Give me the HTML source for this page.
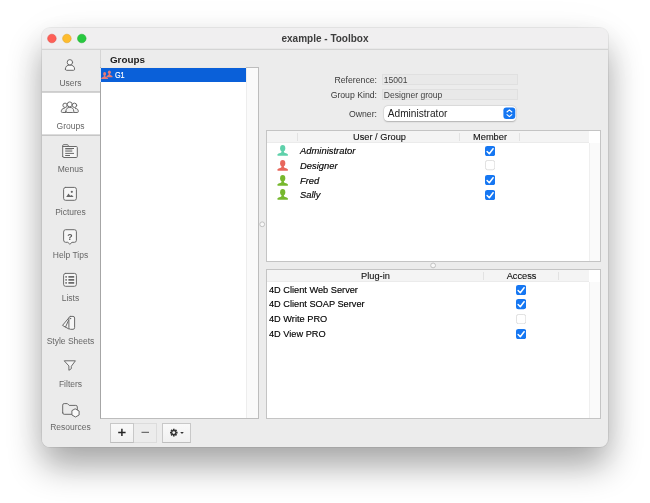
<!DOCTYPE html>
<html>
<head>
<meta charset="utf-8">
<title>example - Toolbox</title>
<style>
html,body{margin:0;padding:0;}
body{width:650px;height:503px;background:#fff;overflow:hidden;position:relative;font-family:"Liberation Sans",sans-serif;color:#222;}
.abs{position:absolute;}
#win{will-change:transform;position:absolute;left:42px;top:28px;width:566px;height:419px;background:#ececec;border-radius:8px;
 box-shadow:0 0 0 1px rgba(0,0,0,0.065),0 19px 34px rgba(0,0,0,0.335),0 8px 50px rgba(0,0,0,0.05);overflow:hidden;}
#tb{position:absolute;left:0;top:0;width:566px;height:23px;background:linear-gradient(#f0eff0 0,#f0eff0 21px,#e8e8e8 21px,#e8e8e8 22px,#d4d4d4 22px);z-index:3;}
.tl{position:absolute;top:7px;width:9px;height:9px;border-radius:50%;}
#title{position:absolute;left:0;width:566px;top:5.9px;text-align:center;font-weight:bold;font-size:10px;line-height:12px;color:#3d3d3d;}
#side{position:absolute;left:0;top:22px;width:58px;height:398px;background:#ebebeb;}
.cell{position:absolute;left:0;width:57px;height:43px;}
.cell .lb{position:absolute;left:-10px;width:77px;top:29px;text-align:center;font-size:8.5px;line-height:10px;color:#666;white-space:nowrap;}
.cell svg{position:absolute;left:0;top:0;}
.selbg{position:absolute;left:0;top:42px;width:58px;height:45px;background:linear-gradient(#cdcdcd 0,#cdcdcd 1px,#d3d3d3 1px,#d3d3d3 2px,#fff 2px,#fff 43px,#dcdcdc 43px,#dcdcdc 44px,#c6c6c6 44px);}
.lbl{position:absolute;font-size:8.7px;line-height:11px;color:#3a3a3a;white-space:nowrap;}
.fld{position:absolute;box-sizing:border-box;border:1px solid #e0e0e0;background:#e9e9e9;font-size:8.55px;line-height:9px;color:#444;padding-left:2px;white-space:nowrap;}
.box{position:absolute;box-sizing:border-box;border:1px solid #c4c4c4;background:#fff;}
.hd{position:absolute;left:0;top:0;height:11px;background:#f4f4f4;border-bottom:1px solid #ebebeb;}
.hd .t{position:absolute;top:0;font-size:9.25px;line-height:12px;color:#111;-webkit-text-stroke:0.1px #111;text-align:center;white-space:nowrap;}
.hd .s{position:absolute;top:2px;width:1px;height:8px;background:#e2e2e2;}
.row{position:absolute;font-size:9.5px;line-height:12px;color:#000;white-space:nowrap;transform:scaleX(0.97);transform-origin:0 0;-webkit-text-stroke:0.15px #000;}
.cb{position:absolute;width:10.2px;height:10.2px;}
.cb svg{position:absolute;left:0;top:0;}
.btn{position:absolute;box-sizing:border-box;border:1px solid #c8c8c8;border-bottom-color:#bebebe;background:linear-gradient(#f9f9f9,#f0f0f0);}
</style>
</head>
<body>
<div id="win">
<div id="in" style="position:absolute;left:0;top:-1px;width:566px;height:420px;">
  <div id="tb">
    <svg class="abs" style="left:0;top:0;" width="60" height="23" viewBox="0 0 60 23"><circle cx="9.9" cy="11.5" r="4.3" fill="#fe5f57" stroke="#df4a42" stroke-width="0.5"/><circle cx="24.9" cy="11.5" r="4.3" fill="#febc2e" stroke="#dfa023" stroke-width="0.5"/><circle cx="39.8" cy="11.5" r="4.3" fill="#28c840" stroke="#1dad2b" stroke-width="0.5"/></svg>
    <div id="title">example - Toolbox</div>
  </div>
  <div id="side">
    <div class="cell" style="top:0"><svg width="58" height="43" viewBox="0 0 58 43" fill="none" stroke="#6a6a6a" stroke-width="1" stroke-linejoin="round" stroke-linecap="round"><path d="M23.4 20.2C23.4 17.2 25.2 16.1 27.9 16.1C30.6 16.1 32.6 17.2 32.6 20.2Q32.6 21.3 31.5 21.3L24.5 21.3Q23.4 21.3 23.4 20.2Z" fill="#f8f8f8"/><circle cx="27.9" cy="13.3" r="2.7" fill="#fafafa"/></svg><div class="lb">Users</div></div>
    <div class="selbg"></div><div class="cell" style="top:43px"><svg width="58" height="43" viewBox="0 0 58 43" fill="none" stroke="#6a6a6a" stroke-width="1" stroke-linejoin="round" stroke-linecap="round"><circle cx="23.1" cy="13.3" r="2.2" fill="#fafafa"/><circle cx="32.5" cy="13.3" r="2.2" fill="#fafafa"/><path d="M23.8 20.5L20.3 20.5Q19.3 20.5 19.3 19.5C19.3 17.6 20.2 16.5 22.3 16.3M31.8 20.5L35.3 20.5Q36.3 20.5 36.3 19.5C36.3 17.6 35.4 16.5 33.3 16.3" fill="#f0f0f0"/><path d="M23.8 19.6C23.8 16.6 25.3 15.4 27.8 15.4C30.3 15.4 31.8 16.6 31.8 19.6Q31.8 20.5 30.8 20.5L24.8 20.5Q23.8 20.5 23.8 19.6Z" fill="#f4f4f4"/><circle cx="27.8" cy="12.4" r="2.5" fill="#fff"/></svg><div class="lb">Groups</div></div>
    <div class="cell" style="top:86px"><svg width="58" height="43" viewBox="0 0 58 43" fill="none" stroke="#6a6a6a" stroke-width="1" stroke-linejoin="round" stroke-linecap="round"><path d="M20.7 21.5L20.7 10.7Q20.7 9.7 21.7 9.7L25.3 9.7Q26.3 9.7 26.3 10.7L26.3 11.5L34.3 11.5Q35.3 11.5 35.3 12.5L35.3 21.5Q35.3 22.5 34.3 22.5L21.7 22.5Q20.7 22.5 20.7 21.5Z" fill="#f6f6f6"/><path d="M20.7 11.5L26.3 11.5"/><path d="M23.2 13.5H32M23.2 18.4H32M23.2 20.5H28" stroke-linecap="butt"/><path d="M23.2 14.8H30.3" stroke="#bdbdbd" stroke-width="1.6" stroke-linecap="butt"/><path d="M23.2 16.1H30.3" stroke-linecap="butt"/></svg><div class="lb">Menus</div></div>
    <div class="cell" style="top:129px"><svg width="58" height="43" viewBox="0 0 58 43" fill="none" stroke="#6a6a6a" stroke-width="1" stroke-linejoin="round" stroke-linecap="round"><rect x="21.6" y="9.4" width="12.8" height="12.9" rx="2" fill="#f6f6f6"/><circle cx="29.8" cy="13.8" r="1.1" fill="#666" stroke="none"/><path d="M24.2 18.9L26.5 15.4L28.2 17.8L29.8 16.9L31.6 18.9Z" fill="#666" stroke="none"/></svg><div class="lb">Pictures</div></div>
    <div class="cell" style="top:172px"><svg width="58" height="43" viewBox="0 0 58 43" fill="none" stroke="#6a6a6a" stroke-width="1" stroke-linejoin="round" stroke-linecap="round"><path d="M21.6 10.7Q21.6 8.7 23.6 8.7L32.4 8.7Q34.4 8.7 34.4 10.7L34.4 19.3Q34.4 21.3 32.4 21.3L30 21.3L27.9 23.3L25.8 21.3L23.6 21.3Q21.6 21.3 21.6 19.3Z" fill="#f6f6f6"/><text x="27.9" y="18.9" text-anchor="middle" font-family="Liberation Sans, sans-serif" font-weight="bold" font-size="8.8" fill="#555" stroke="none">?</text></svg><div class="lb">Help Tips</div></div>
    <div class="cell" style="top:215px"><svg width="58" height="43" viewBox="0 0 58 43" fill="none" stroke="#6a6a6a" stroke-width="1" stroke-linejoin="round" stroke-linecap="round"><rect x="21.6" y="9.4" width="12.8" height="12.9" rx="2" fill="#f6f6f6"/><path d="M23.4 12.9H24.8M26.4 12.9H32.2M23.4 15.9H24.8M26.4 15.9H32.2M23.4 18.9H24.8M26.4 18.9H32.2" stroke-width="1.6" stroke-linecap="butt"/></svg><div class="lb">Lists</div></div>
    <div class="cell" style="top:258px"><svg width="58" height="43" viewBox="0 0 58 43" fill="none" stroke="#6a6a6a" stroke-width="1" stroke-linejoin="round" stroke-linecap="round"><path d="M26.9 10.8L20.5 18.4L26.9 22" fill="#f2f2f2"/><path d="M26.6 13.2L23.5 20.1"/><rect x="26.9" y="9.4" width="5.7" height="12.9" rx="1.6" fill="#f6f6f6"/><circle cx="28.6" cy="11.5" r="0.7" fill="#6a6a6a" stroke="none"/></svg><div class="lb">Style Sheets</div></div>
    <div class="cell" style="top:301px"><svg width="58" height="43" viewBox="0 0 58 43" fill="none" stroke="#6a6a6a" stroke-width="1" stroke-linejoin="round" stroke-linecap="round"><path d="M22.6 10.8L33.4 10.8L29.3 16.3L29.3 18.7L26.9 20.3L26.9 16.3Z" fill="#f4f4f4"/></svg><div class="lb">Filters</div></div>
    <div class="cell" style="top:344px"><svg width="58" height="43" viewBox="0 0 58 43" fill="none" stroke="#6a6a6a" stroke-width="1" stroke-linejoin="round" stroke-linecap="round"><path d="M20.7 19.8L20.7 12.1Q20.7 10.6 22.2 10.6L25.4 10.6L27.2 12.4L33.8 12.4Q35.3 12.4 35.3 13.9L35.3 19.8Q35.3 21.3 33.8 21.3L22.2 21.3Q20.7 21.3 20.7 19.8Z"/><path d="M33.5 16L37.1 18L37.1 22L33.5 24L29.9 22L29.9 18Z" fill="#fafafa"/></svg><div class="lb">Resources</div></div>
  </div>

  <div class="abs" style="left:67.9px;top:27px;font-weight:bold;font-size:9.85px;line-height:12px;color:#1c1c1c;">Groups</div>

  <div class="abs" style="left:58px;top:23px;width:1px;height:17px;background:#d5d5d5;"></div>
  <!-- groups list -->
  <div class="box" style="left:58px;top:40px;width:159px;height:352px;border-color:#bdbdbd;border-left-color:#a6a6a6;z-index:2;">
    <div class="abs" style="left:0;top:0;width:145px;height:14px;background:#0a60d9;"></div><div class="abs" style="left:0;top:-1px;width:145px;height:1px;background:#ebe9e5;"></div><div class="abs" style="left:-1px;top:0;width:1px;height:14px;background:#dde5f2;"></div>
    <svg class="abs" style="left:0;top:2px;" width="13" height="11" viewBox="0 0 13 11" fill="#ea7b76"><ellipse cx="8.4" cy="2.2" rx="1.5" ry="1.8"/><path d="M7.7 3.5L7.7 4.5C7.7 5.3 5.4 5.4 5.4 6.8L5.4 7.3L11.6 7.3L11.6 6.8C11.6 5.4 9.1 5.3 9.1 4.5L9.1 3.5Z"/><ellipse cx="3.6" cy="3.9" rx="1.5" ry="1.8"/><path d="M2.9 5.2L2.9 6.2C2.9 7 0.2 7.1 0.2 8.5L0.2 9L7 9L7 8.5C7 7.1 4.3 7 4.3 6.2L4.3 5.2Z"/></svg><div class="abs" style="left:13.6px;top:1.4px;font-size:9px;line-height:12px;color:#fff;-webkit-text-stroke:0.2px #fff;transform:scaleX(0.8);transform-origin:0 0;">G1</div>
    <div class="abs" style="left:145px;top:0;width:12px;height:350px;background:#fafafa;border-left:1px solid #ededed;box-sizing:border-box;"></div>
  </div>

  <!-- buttons -->
  <div class="btn" style="left:91px;top:396px;width:24px;height:20px;background:#ececec;border-color:#dcdcdc;"></div>
  <div class="btn" style="left:68px;top:396px;width:24px;height:20px;"></div>
  <div class="btn" style="left:120px;top:396px;width:29px;height:20px;"></div>
  <svg class="abs" style="left:68px;top:396px;" width="82" height="20" viewBox="0 0 82 20">
    <path d="M8.2 9.4H15.6M11.9 5.7V13.1" stroke="#262626" stroke-width="1.5" fill="none"/>
    <path d="M31.5 9.4H39" stroke="#6e6e6e" stroke-width="1.1" fill="none"/>
    <g transform="translate(63.8 9.6)" fill="#333">
      <circle r="2.6"/>
      <g stroke="#333" stroke-width="1.7"><path d="M0 -3.8V3.8"/><path d="M0 -3.8V3.8" transform="rotate(45)"/><path d="M0 -3.8V3.8" transform="rotate(90)"/><path d="M0 -3.8V3.8" transform="rotate(135)"/></g>
      <circle r="1.4" fill="#f6f6f6"/>
    </g>
    <path d="M70.2 9L73.8 9L72 11Z" fill="#333"/>
  </svg>

  <svg class="abs" style="left:216px;top:193px;" width="8" height="8" viewBox="0 0 8 8"><circle cx="4.2" cy="4.3" r="2.4" fill="#f8f8f8" stroke="#bcbcbc" stroke-width="0.9"/></svg>
  <svg class="abs" style="left:387px;top:234px;" width="8" height="8" viewBox="0 0 8 8"><circle cx="4.1" cy="4.45" r="2.4" fill="#f8f8f8" stroke="#bcbcbc" stroke-width="0.9"/></svg>
  <!-- form -->
  <div class="lbl" style="right:231px;top:47.7px;">Reference:</div>
  <div class="fld" style="left:340px;top:47px;width:136px;height:11px;"><span style="position:relative;left:-1.2px;top:0.6px">15001</span></div>
  <div class="lbl" style="right:231px;top:63px;">Group Kind:</div>
  <div class="fld" style="left:340px;top:62px;width:136px;height:11px;"><span style="position:relative;left:-1.2px;top:0.9px">Designer group</span></div>
  <div class="lbl" style="right:231px;top:82px;">Owner:</div>
  <div class="abs" style="left:342px;top:79px;width:132px;height:15px;background:#fff;border-radius:4px;box-shadow:0 0 0 0.5px rgba(0,0,0,0.07),0 0.5px 1.5px rgba(0,0,0,0.22);">
    <div class="abs" style="left:3.8px;top:1px;font-size:10.15px;line-height:13px;color:#222;">Administrator</div>
    <svg class="abs" style="left:119px;top:1px;" width="13" height="13" viewBox="0 0 13 13"><rect x="0.4" y="0.5" width="11.9" height="11.5" rx="2.9" fill="#1677f2"/><path d="M4 5L6.4 2.9L8.8 5M4 7.6L6.4 9.7L8.8 7.6" fill="none" stroke="#fff" stroke-width="1.1" stroke-linecap="round" stroke-linejoin="round"/></svg>
  </div>

  <!-- users table -->
  <div class="box" style="left:224px;top:103px;width:335px;height:132px;">
    <div class="hd" style="width:322px;">
      <div class="s" style="left:30px"></div><div class="s" style="left:192px"></div><div class="s" style="left:252px"></div>
      <div class="t" style="left:32px;width:161px;">User / Group</div>
      <div class="t" style="left:193.5px;width:59px;">Member</div>
    </div>
    <div class="abs" style="left:322px;top:12px;width:11px;height:118px;background:#fafafa;border-left:1px solid #efefef;box-sizing:border-box;"></div>
    <svg class="abs" style="left:10px;top:14.00px;" width="12" height="12" viewBox="0 0 12 12"><path d="M4.5 5.2L4.5 6.9C4.5 8 0.3 8 0.3 10Q0.3 10.8 1.1 10.8L10.3 10.8Q11.1 10.8 11.1 10C11.1 8 6.9 8 6.9 6.9L6.9 5.2Z" fill="#5fd1ab"/><ellipse cx="5.7" cy="3.2" rx="2.6" ry="3.2" fill="#5fd1ab"/></svg><div class="row" style="left:33px;top:14px;font-style:italic;font-size:9.7px;">Administrator</div>
    <svg class="abs" style="left:10px;top:28.75px;" width="12" height="12" viewBox="0 0 12 12"><path d="M4.5 5.2L4.5 6.9C4.5 8 0.3 8 0.3 10Q0.3 10.8 1.1 10.8L10.3 10.8Q11.1 10.8 11.1 10C11.1 8 6.9 8 6.9 6.9L6.9 5.2Z" fill="#e8675c"/><ellipse cx="5.7" cy="3.2" rx="2.6" ry="3.2" fill="#e8675c"/></svg><div class="row" style="left:33px;top:28.75px;font-style:italic;font-size:9.7px;">Designer</div>
    <svg class="abs" style="left:10px;top:43.50px;" width="12" height="12" viewBox="0 0 12 12"><path d="M4.5 5.2L4.5 6.9C4.5 8 0.3 8 0.3 10Q0.3 10.8 1.1 10.8L10.3 10.8Q11.1 10.8 11.1 10C11.1 8 6.9 8 6.9 6.9L6.9 5.2Z" fill="#77b82e"/><ellipse cx="5.7" cy="3.2" rx="2.6" ry="3.2" fill="#77b82e"/></svg><div class="row" style="left:33px;top:43.5px;font-style:italic;font-size:9.7px;">Fred</div>
    <svg class="abs" style="left:10px;top:58.25px;" width="12" height="12" viewBox="0 0 12 12"><path d="M4.5 5.2L4.5 6.9C4.5 8 0.3 8 0.3 10Q0.3 10.8 1.1 10.8L10.3 10.8Q11.1 10.8 11.1 10C11.1 8 6.9 8 6.9 6.9L6.9 5.2Z" fill="#77b82e"/><ellipse cx="5.7" cy="3.2" rx="2.6" ry="3.2" fill="#77b82e"/></svg><div class="row" style="left:33px;top:58.25px;font-style:italic;font-size:9.7px;">Sally</div>
    <div class="cb" style="left:217.9px;top:14.60px;"><svg width="10.2" height="10.2" viewBox="0 0 10.2 10.2"><rect x="0" y="0" width="10.2" height="10.2" rx="2.5" fill="#1677f2"/><path d="M2.1 5.6L4.3 7.8L8.1 2.7" fill="none" stroke="#fff" stroke-width="1.5" stroke-linecap="round" stroke-linejoin="round"/></svg></div>
    <div class="cb" style="left:217.9px;top:29.35px;"><svg width="10.2" height="10.2" viewBox="0 0 10.2 10.2"><rect x="0.4" y="0.4" width="9.4" height="9.4" rx="2.3" fill="#fff" stroke="#d6d6d6" stroke-width="0.8"/></svg></div>
    <div class="cb" style="left:217.9px;top:44.10px;"><svg width="10.2" height="10.2" viewBox="0 0 10.2 10.2"><rect x="0" y="0" width="10.2" height="10.2" rx="2.5" fill="#1677f2"/><path d="M2.1 5.6L4.3 7.8L8.1 2.7" fill="none" stroke="#fff" stroke-width="1.5" stroke-linecap="round" stroke-linejoin="round"/></svg></div>
    <div class="cb" style="left:217.9px;top:58.85px;"><svg width="10.2" height="10.2" viewBox="0 0 10.2 10.2"><rect x="0" y="0" width="10.2" height="10.2" rx="2.5" fill="#1677f2"/><path d="M2.1 5.6L4.3 7.8L8.1 2.7" fill="none" stroke="#fff" stroke-width="1.5" stroke-linecap="round" stroke-linejoin="round"/></svg></div>
  </div>

  <!-- plugin table -->
  <div class="box" style="left:224px;top:242px;width:335px;height:150px;">
    <div class="hd" style="width:322px;">
      <div class="s" style="left:216px"></div><div class="s" style="left:291px"></div>
      <div class="t" style="left:0.5px;width:216px;">Plug-in</div>
      <div class="t" style="left:217.6px;width:74px;">Access</div>
    </div>
    <div class="abs" style="left:322px;top:12px;width:11px;height:136px;background:#fafafa;border-left:1px solid #efefef;box-sizing:border-box;"></div>
    <div class="row" style="left:2px;top:13.6px;">4D Client Web Server</div>
    <div class="row" style="left:2px;top:28.3px;">4D Client SOAP Server</div>
    <div class="row" style="left:2px;top:42.8px;">4D Write PRO</div>
    <div class="row" style="left:2px;top:58.25px;">4D View PRO</div>
    <div class="cb" style="left:248.9px;top:14.60px;"><svg width="10.2" height="10.2" viewBox="0 0 10.2 10.2"><rect x="0" y="0" width="10.2" height="10.2" rx="2.5" fill="#1677f2"/><path d="M2.1 5.6L4.3 7.8L8.1 2.7" fill="none" stroke="#fff" stroke-width="1.5" stroke-linecap="round" stroke-linejoin="round"/></svg></div>
    <div class="cb" style="left:248.9px;top:29.35px;"><svg width="10.2" height="10.2" viewBox="0 0 10.2 10.2"><rect x="0" y="0" width="10.2" height="10.2" rx="2.5" fill="#1677f2"/><path d="M2.1 5.6L4.3 7.8L8.1 2.7" fill="none" stroke="#fff" stroke-width="1.5" stroke-linecap="round" stroke-linejoin="round"/></svg></div>
    <div class="cb" style="left:248.9px;top:44.10px;"><svg width="10.2" height="10.2" viewBox="0 0 10.2 10.2"><rect x="0.4" y="0.4" width="9.4" height="9.4" rx="2.3" fill="#fff" stroke="#d6d6d6" stroke-width="0.8"/></svg></div>
    <div class="cb" style="left:248.9px;top:58.85px;"><svg width="10.2" height="10.2" viewBox="0 0 10.2 10.2"><rect x="0" y="0" width="10.2" height="10.2" rx="2.5" fill="#1677f2"/><path d="M2.1 5.6L4.3 7.8L8.1 2.7" fill="none" stroke="#fff" stroke-width="1.5" stroke-linecap="round" stroke-linejoin="round"/></svg></div>
  </div>
</div>
</div>
</body>
</html>
